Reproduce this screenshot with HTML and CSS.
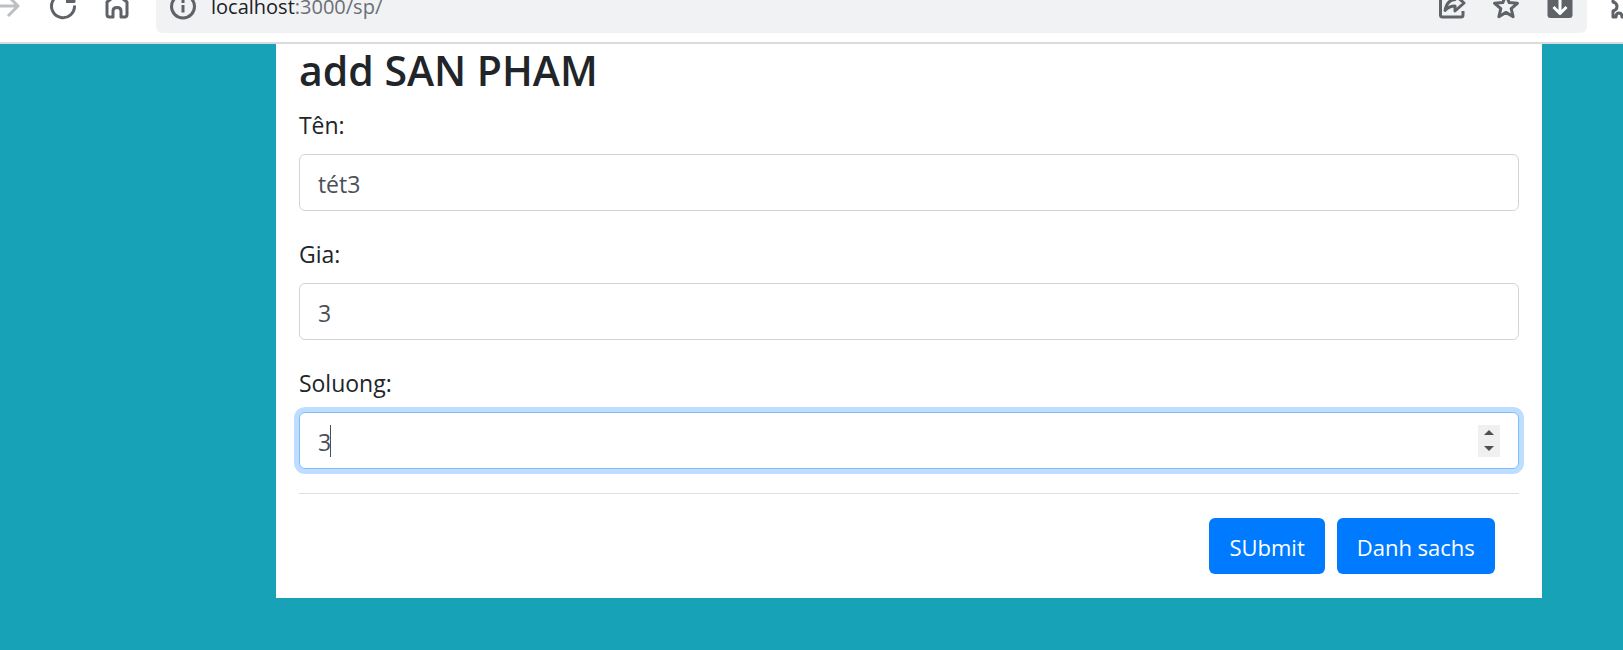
FILE: index.html
```html
<!DOCTYPE html>
<html lang="vi">
<head>
<meta charset="utf-8">
<meta name="viewport" content="width=device-width, initial-scale=1">
<title>add SAN PHAM</title>
<link rel="stylesheet" href="styles.css">
</head>
<body>
<header class="toolbar">
  <nav class="nav">
    <button class="icon-button icon-faded" type="button" aria-label="Forward">
      <svg viewBox="0 0 28 28"><path d="M0 13H22M13 3l10 10-10 10"/></svg>
    </button>
    <button class="icon-button" type="button" aria-label="Reload">
      <svg viewBox="0 0 28 28"><path d="M25.500 12.500A11.500 11.500 0 1 1 21 4M25 1v7.500h-8"/></svg>
    </button>
    <button class="icon-button" type="button" aria-label="Home">
      <svg viewBox="0 0 28 28"><path d="M4 9L14 1.500l10 7.500V21.500q0 2.500-2.500 2.500H18V18q0-3.500-4-3.500t-4 3.500v6H6.500Q4 24 4 21.500z"/></svg>
    </button>
  </nav>
  <div class="address">
    <button class="icon-button" type="button" aria-label="Site information">
      <svg viewBox="0 0 28 28"><circle cx="14" cy="13.500" r="11.500"/><path d="M14 12V19.500M14 7v3"/></svg>
    </button>
    <span class="url"><span class="host">localhost</span>:3000/sp/</span>
    <button class="icon-button" type="button" aria-label="Share">
      <svg viewBox="0 0 28 28"><path d="M8 3H5Q2.500 3 2.500 5.500V22Q2.500 24 4.500 24H23Q25 24 25 22V18M7 17.500Q9 7 17 6.500V2l9 8-9 8V13Q11 13 7 17.500z"/></svg>
    </button>
    <button class="icon-button" type="button" aria-label="Bookmark">
      <svg viewBox="0 0 28 28"><path d="M14 2l3.200 7.600 8.200.7-6.200 5.400 1.900 8-7.100-4.300-7.100 4.300 1.900-8L2.600 10.300l8.200-.7z"/></svg>
    </button>
    <button class="icon-button" type="button" aria-label="Download">
      <svg viewBox="0 0 28 28"><rect class="solid" x="1.500" y="0" width="25" height="25" rx="3"/><path class="light" d="M14 4V20M7.500 14l6.500 6.500 6.500-6.500"/></svg>
    </button>
  </div>
  <button class="icon-button extension" type="button" aria-label="Extensions">
    <svg viewBox="0 0 28 28"><path d="M6 9V5H10Q10 1 13 1t3 4h7v7q4 0 4 3t-4 3v6H15Q15 20 12 20t-3 4H6V18Q10 17 10 13.500T6 9z"/></svg>
  </button>
</header>
<main class="page">
  <form class="card">
    <h3 class="title">add SAN PHAM</h3>
    <div class="group">
      <label for="ten">Tên:</label>
      <input class="control" id="ten" type="text" value="tét3">
    </div>
    <div class="group">
      <label for="gia">Gia:</label>
      <input class="control" id="gia" type="text" inputmode="numeric" value="3">
    </div>
    <div class="group">
      <label for="soluong">Soluong:</label>
      <div class="control number focused">
        <input class="bare" id="soluong" type="text" inputmode="numeric" value="3">
        <span class="caret"></span>
        <span class="spinner">
          <button type="button" aria-label="Increase"><svg viewBox="0 0 10 5"><path d="M0 5L5 0l5 5z"/></svg></button>
          <button type="button" aria-label="Decrease"><svg viewBox="0 0 10 5"><path d="M0 0h10L5 5z"/></svg></button>
        </span>
      </div>
    </div>
    <hr class="rule">
    <div class="actions">
      <button class="btn" type="submit">SUbmit</button>
      <button class="btn" type="button">Danh sachs</button>
    </div>
  </form>
</main>
</body>
</html>
```
FILE: styles.css
```css
* { box-sizing: border-box; }
body {
  margin: 0;
  min-height: 100vh;
  background: #17a2b8;
  color: #212529;
  font-family: "Open Sans", "Noto Sans", sans-serif;
  font-size: 23px;
  line-height: 38px;
}
button, input { font: inherit; color: inherit; }
button { border: 0; padding: 0; background: none; }

/* Browser toolbar, scrolled partly out of view */
.toolbar {
  display: flex;
  height: 44px;
  overflow: hidden;
  background: #fff;
  border-bottom: 2px solid #dadbdc;
}
.nav, .address, .extension {
  display: flex;
  align-items: center;
  height: 52px;
  margin-top: -19px;
}
.nav { gap: 26px; margin-left: -5px; margin-right: 25px; }
.icon-button { flex: none; width: 28px; color: #5f6368; }
.icon-faded { color: #bdbfc1; }
.icon-button svg {
  display: block;
  width: 28px;
  height: 28px;
  fill: none;
  stroke: currentColor;
  stroke-width: 3;
  stroke-linejoin: round;
}
.icon-button .solid { fill: currentColor; stroke: none; }
.icon-button .light { stroke: #fff; }
.address {
  flex: 1;
  gap: 26px;
  padding: 0 13px;
  border-radius: 6px;
  background: #f1f2f4;
}
.url {
  flex: 1;
  margin-left: -12px;
  font-size: 20px;
  line-height: 14px;
  color: #6b6f74;
}
.host { color: #202124; }
.extension { margin-left: 20px; margin-right: -12px; }

.page { padding: 0 5% 52px 17%; }
.card { padding: 0 23px 24px; background: #fff; }
.title {
  margin: 0 0 10px;
  font-size: 41px;
  line-height: 52px;
  font-weight: 600;
}
.group { margin-bottom: 24px; }
.group label { display: block; margin-bottom: 10px; }
.control {
  display: block;
  width: 100%;
  height: 57px;
  padding: 2px 18px 0;
  border: 1px solid #ced4da;
  border-radius: 6px;
  background: #fff;
  color: #495057;
}
.number { display: flex; align-items: center; padding-top: 0; }
.focused { border-color: #80bdff; box-shadow: 0 0 0 5px #bfdeff; }
.bare {
  width: 12px;
  padding: 2px 0 0;
  border: 0;
  outline: 0;
  background: none;
}
.caret { width: 1px; height: 32px; background: #495057; }
.spinner {
  display: flex;
  flex-direction: column;
  width: 22px;
  height: 32px;
  margin-left: auto;
  background: #f0f0f0;
}
.spinner button { display: flex; flex: 1; align-items: center; justify-content: center; }
.spinner svg { width: 10px; height: 5px; fill: #505050; }
.rule { margin: 0 0 24px; border: 0; border-top: 1px solid #dfdfdf; }
.actions { display: flex; justify-content: flex-end; gap: 12px; padding-right: 24px; }
.btn {
  height: 56px;
  padding: 2px 20px 0;
  border-radius: 6px;
  background: #007bff;
  color: #fff;
  font-size: 22px;
}
```
